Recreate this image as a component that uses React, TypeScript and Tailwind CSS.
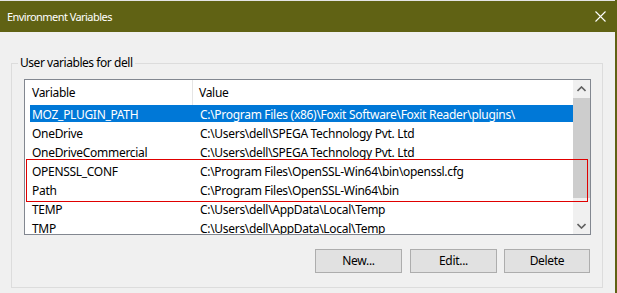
import React from "react";

const rows: [string, string][] = [
  ["MOZ_PLUGIN_PATH", "C:\\Program Files (x86)\\Foxit Software\\Foxit Reader\\plugins\\"],
  ["OneDrive", "C:\\Users\\dell\\SPEGA Technology Pvt. Ltd"],
  ["OneDriveCommercial", "C:\\Users\\dell\\SPEGA Technology Pvt. Ltd"],
  ["OPENSSL_CONF", "C:\\Program Files\\OpenSSL-Win64\\bin\\openssl.cfg"],
  ["Path", "C:\\Program Files\\OpenSSL-Win64\\bin"],
  ["TEMP", "C:\\Users\\dell\\AppData\\Local\\Temp"],
  ["TMP", "C:\\Users\\dell\\AppData\\Local\\Temp"],
];

const font = { fontFamily: '"Noto Sans", "Open Sans", sans-serif' };

export default function App() {
  return (
    <div
      className="relative w-[617px] h-[293px] overflow-hidden bg-[#f0f0f0] text-[12px] tracking-[-0.3px] text-black"
      style={font}
    >
      <div className="h-px bg-[#e4e4e4]" />
      <div className="flex h-[31px] items-center justify-between bg-[#606214] pl-[7px] pr-[10px] text-white">
        <span className="text-[11px] leading-none tracking-[-0.55px]">Environment Variables</span>
        <svg width="11" height="11" viewBox="0 0 11 11" className="mr-[1px]">
          <path d="M0.5 0.5 L10.5 10.5 M10.5 0.5 L0.5 10.5" stroke="white" strokeWidth="1.1" />
        </svg>
      </div>

      <div className="pl-[11px] pt-[31px]">
        <div className="relative h-[225px] w-[592px] border border-[#dcdcdc] pl-[12px] pt-[15px]">
          <span className="absolute left-[6px] top-[-9px] bg-[#f0f0f0] px-[2px] leading-[16px] tracking-[-0.45px]">
            User variables for dell
          </span>

          <div className="flex h-[156px] w-[567px] border border-[#828790] bg-white">
            <div className="flex-1 overflow-hidden">
              <div className="flex h-[25px] items-center">
                <div className="flex h-full w-[168px] items-center border-r border-[#e5e5e5] pl-[7px]">
                  Variable
                </div>
                <div className="pl-[6px]">Value</div>
              </div>
              {rows.map(([k, v], i) => (
                <div key={k} className="relative h-[19px]">
                  {i === 0 && (
                    <div className="absolute left-[5px] right-0 top-0 h-[17px] bg-[#0078d7]" />
                  )}
                  <div
                    className={
                      "relative flex h-[19px] items-center whitespace-nowrap " +
                      (i === 0 ? "text-white" : "text-black")
                    }
                  >
                    <div className="w-[168px] pl-[7px]">{k}</div>
                    <div className="pl-[7px]">{v}</div>
                  </div>
                </div>
              ))}
            </div>
            <div className="flex w-[17px] flex-col bg-[#f0f0f0]">
              <div className="flex h-[17px] items-center justify-center">
                <svg width="9" height="6" viewBox="0 0 9 6">
                  <path d="M0.5 5 L4.5 1 L8.5 5" stroke="#606060" strokeWidth="1.6" fill="none" />
                </svg>
              </div>
              <div className="mt-[1px] h-[100px] bg-[#cdcdcd]" />
              <div className="flex-1" />
              <div className="flex h-[17px] items-center justify-center">
                <svg width="9" height="6" viewBox="0 0 9 6">
                  <path d="M0.5 1 L4.5 5 L8.5 1" stroke="#606060" strokeWidth="1.6" fill="none" />
                </svg>
              </div>
            </div>
          </div>

          <div className="mt-[14px] flex justify-end pr-[12px]">
            <button className="flex h-[24px] w-[87px] items-center justify-center border border-[#adadad] bg-[#e1e1e1]">
              New...
            </button>
            <button className="ml-[8px] flex h-[24px] w-[87px] items-center justify-center border border-[#adadad] bg-[#e1e1e1]">
              Edit...
            </button>
            <button className="ml-[7px] flex h-[24px] w-[86px] items-center justify-center border border-[#adadad] bg-[#e1e1e1]">
              Delete
            </button>
          </div>
        </div>
      </div>

      <div className="absolute right-0 top-0 h-full w-[2px] bg-[#606214]" />
      <div className="pointer-events-none absolute left-[26px] top-[159px] h-[43px] w-[562px] border border-[#e00000]" />
    </div>
  );
}
